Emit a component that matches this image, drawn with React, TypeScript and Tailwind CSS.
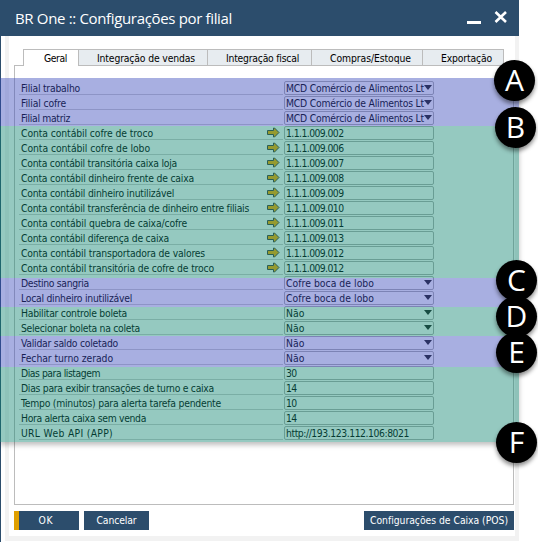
import { useLayoutEffect, useRef, useState } from 'react';

type Row = { label: string; width: number; value: string; kind?: 'account' | 'select' };

const rows: Row[] = [
  { label: 'Filial trabalho', width: 59, value: 'MCD Comércio de Alimentos Lt', kind: 'select' },
  { label: 'Filial cofre', width: 45, value: 'MCD Comércio de Alimentos Lt', kind: 'select' },
  { label: 'Filial matriz', width: 49, value: 'MCD Comércio de Alimentos Lt', kind: 'select' },
  { label: 'Conta contábil cofre de troco', width: 132, value: '1.1.1.009.002', kind: 'account' },
  { label: 'Conta contábil cofre de lobo', width: 129, value: '1.1.1.009.006', kind: 'account' },
  { label: 'Conta contábil transitória caixa loja', width: 156, value: '1.1.1.009.007', kind: 'account' },
  { label: 'Conta contábil dinheiro frente de caixa', width: 173, value: '1.1.1.009.008', kind: 'account' },
  { label: 'Conta contábil dinheiro inutilizável', width: 153, value: '1.1.1.009.009', kind: 'account' },
  { label: 'Conta contábil transferência de dinheiro entre filiais', width: 228, value: '1.1.1.009.010', kind: 'account' },
  { label: 'Conta contábil quebra de caixa/cofre', width: 166, value: '1.1.1.009.011', kind: 'account' },
  { label: 'Conta contábil diferença de caixa', width: 148, value: '1.1.1.009.013', kind: 'account' },
  { label: 'Conta contábil transportadora de valores', width: 184, value: '1.1.1.009.012', kind: 'account' },
  { label: 'Conta contábil transitória de cofre de troco', width: 193, value: '1.1.1.009.012', kind: 'account' },
  { label: 'Destino sangria', width: 68, value: 'Cofre boca de lobo', kind: 'select' },
  { label: 'Local dinheiro inutilizável', width: 111, value: 'Cofre boca de lobo', kind: 'select' },
  { label: 'Habilitar controle boleta', width: 106, value: 'Não', kind: 'select' },
  { label: 'Selecionar boleta na coleta', width: 119, value: 'Não', kind: 'select' },
  { label: 'Validar saldo coletado', width: 97, value: 'Não', kind: 'select' },
  { label: 'Fechar turno zerado', width: 92, value: 'Não', kind: 'select' },
  { label: 'Dias para listagem', width: 79, value: '30' },
  { label: 'Dias para exibir transações de turno e caixa', width: 193, value: '14' },
  { label: 'Tempo (minutos) para alerta tarefa pendente', width: 200, value: '10' },
  { label: 'Hora alerta caixa sem venda', width: 125, value: '14' },
  { label: 'URL Web API (APP)', width: 92, value: 'http://193.123.112.106:8021' },
];

const tabs = [
  { name: 'Integração de vendas', width: 98, box: 'w-[129px] pl-[18px]' },
  { name: 'Integração fiscal', width: 73, box: 'w-[104px] pl-[18px]' },
  { name: 'Compras/Estoque', width: 81, box: 'w-[111px] pl-[18px]' },
  { name: 'Exportação', width: 51, box: 'w-[82px] pl-[18px] border-r' },
];

const bands = [
  'h-12 bg-[#3848bb]/44',
  'h-[152px] bg-[#0e8570]/44',
  'h-[29px] bg-[#3848bb]/44',
  'h-[29px] bg-[#0e8570]/44',
  'h-[31px] bg-[#3848bb]/44',
  'h-[75px] bg-[#0e8570]/44',
];

const markers = [
  { letter: 'A', place: 'left-[494px] top-[60px]' },
  { letter: 'B', place: 'left-[495px] top-[107px]' },
  { letter: 'C', place: 'left-[496px] top-[260px]' },
  { letter: 'D', place: 'left-[496px] top-[296px]' },
  { letter: 'E', place: 'left-[496px] top-[332px]' },
  { letter: 'F', place: 'left-[496px] top-[422px]' },
];

function valueWidth(value: string) {
  if (value.startsWith('MCD')) return 138;
  if (value.startsWith('Cofre')) return 88;
  if (value.startsWith('http')) return 123;
  if (value.startsWith('1.1')) return 57.5;
  return value === 'Não' ? 18.5 : 10.5;
}

/** Spreads the letters of a text so that it takes the given width. */
function Fitted({ text, width }: { text: string; width: number }) {
  const ref = useRef<HTMLSpanElement>(null);
  const [spacing, setSpacing] = useState(0);
  useLayoutEffect(() => {
    const natural = ref.current!.getBoundingClientRect().width;
    setSpacing((width - natural) / text.length);
  }, [text, width]);
  return (
    <span ref={ref} style={{ letterSpacing: spacing }}>
      {text}
    </span>
  );
}

function LinkArrow() {
  return (
    <svg className="mr-[3px] mt-[2px] h-[11px] w-[13px] shrink-0" viewBox="0 0 13 11">
      <path d="M.5 3.5H6.5V1L7.5 1 12 5.5 7.5 10 6.5 10V7.5H.5Z" fill="#ffac00" stroke="#404040" strokeWidth="1" />
    </svg>
  );
}

function FormRow({ label, width, value, kind }: Row) {
  return (
    <div className="flex h-[15px]">
      <div className="mr-px flex w-[264px] justify-between border-b border-[#cfcfcf] pl-[2px]">
        <div className="leading-[17px]">
          <Fitted text={label} width={width} />
        </div>
        {kind === 'account' && <LinkArrow />}
      </div>
      <div className="mt-px flex h-[14px] w-[150px] justify-between rounded-[2px] border border-[#b0b0b0] pl-px">
        <div className="w-[138px] leading-[13px]">
          <Fitted text={value} width={valueWidth(value)} />
        </div>
        {kind === 'select' && (
          <svg className="mr-px mt-[3px] h-[5px] w-[8px] shrink-0" viewBox="0 0 8 5">
            <path d="M0 0H8L4 5Z" fill="#202020" />
          </svg>
        )}
      </div>
    </div>
  );
}

export default function App() {
  return (
    <div className="relative h-[542px] w-[538px] overflow-hidden whitespace-nowrap bg-white font-['DejaVu_Sans_Condensed','DejaVu_Sans',sans-serif] text-[10.3px] text-black [font-stretch:condensed]">
      <div className="h-[542px] w-[519px] border-l border-[#2c4d6c]">
        <header className="-ml-px flex h-9 items-center bg-[#2c4d6c] pl-[15px] text-white">
          <h1 className="flex-1 font-['Open_Sans',sans-serif] text-[15px] leading-9 [font-stretch:normal]">
            <Fitted text="BR One :: Configurações por filial" width={217} />
          </h1>
          <svg className="mr-[11px] h-[14px] w-[42px]" viewBox="0 0 42 14">
            <path d="M1 11.5H15" stroke="white" strokeWidth="3" />
            <path d="M29.5 1L40 11M40 1L29.5 11" stroke="white" strokeWidth="2.6" />
          </svg>
        </header>
        <main className="ml-1 h-[505px] w-[514px] border-x-4 border-b-[5px] border-[#f2f2f2] pl-[5px] pt-[13px]">
          <nav className="flex h-[17px] w-[500px] items-end">
            <div className="h-px w-[9px] bg-[#bcbcbc]" />
            <div className="h-[17px] w-[55px] border-l border-t border-[#bcbcbc] pl-5 leading-4">
              <Fitted text="Geral" width={23} />
            </div>
            {tabs.map((tab) => (
              <div key={tab.name} className={`h-[17px] border-y border-l border-[#bcbcbc] bg-[#e7ecf0] leading-4 ${tab.box}`}>
                <Fitted text={tab.name} width={tab.width} />
              </div>
            ))}
            <div className="h-px flex-1 bg-[#bcbcbc]" />
          </nav>
          <section className="h-[439px] w-[500px] border-x border-b border-[#bcbcbc] pl-1 pt-[14px]">
            {rows.map((row) => (
              <FormRow key={row.label} {...row} />
            ))}
          </section>
          <footer className="mt-[6px] flex h-[19px] w-[500px] gap-[5px] text-center leading-[17px] text-white">
            <button className="w-[65px] border-l-[5px] border-[#e0a000] bg-[#2c4d6c] pr-[6px]">
              <Fitted text="OK" width={15} />
            </button>
            <button className="w-[65px] bg-[#2c4d6c]">
              <Fitted text="Cancelar" width={40} />
            </button>
            <button className="ml-auto w-[150px] bg-[#2c4d6c]">
              <Fitted text="Configurações de Caixa (POS)" width={138} />
            </button>
          </footer>
        </main>
      </div>
      <div className="pointer-events-none absolute left-0 top-[78px] w-[519px] shadow-[0_3px_5px_rgba(0,0,0,0.25)] [clip-path:inset(0_-6px_-10px_0)]">
        {bands.map((band, i) => (
          <div key={i} className={band} />
        ))}
      </div>
      {markers.map((marker) => (
        <div
          key={marker.letter}
          className={`absolute flex size-[41px] items-center justify-center rounded-full bg-black pb-[2px] font-['Open_Sans',sans-serif] text-[30px] leading-none text-white shadow-[0_3px_4px_rgba(0,0,0,0.45)] [font-stretch:normal] ${marker.place}`}
        >
          {marker.letter}
        </div>
      ))}
    </div>
  );
}
